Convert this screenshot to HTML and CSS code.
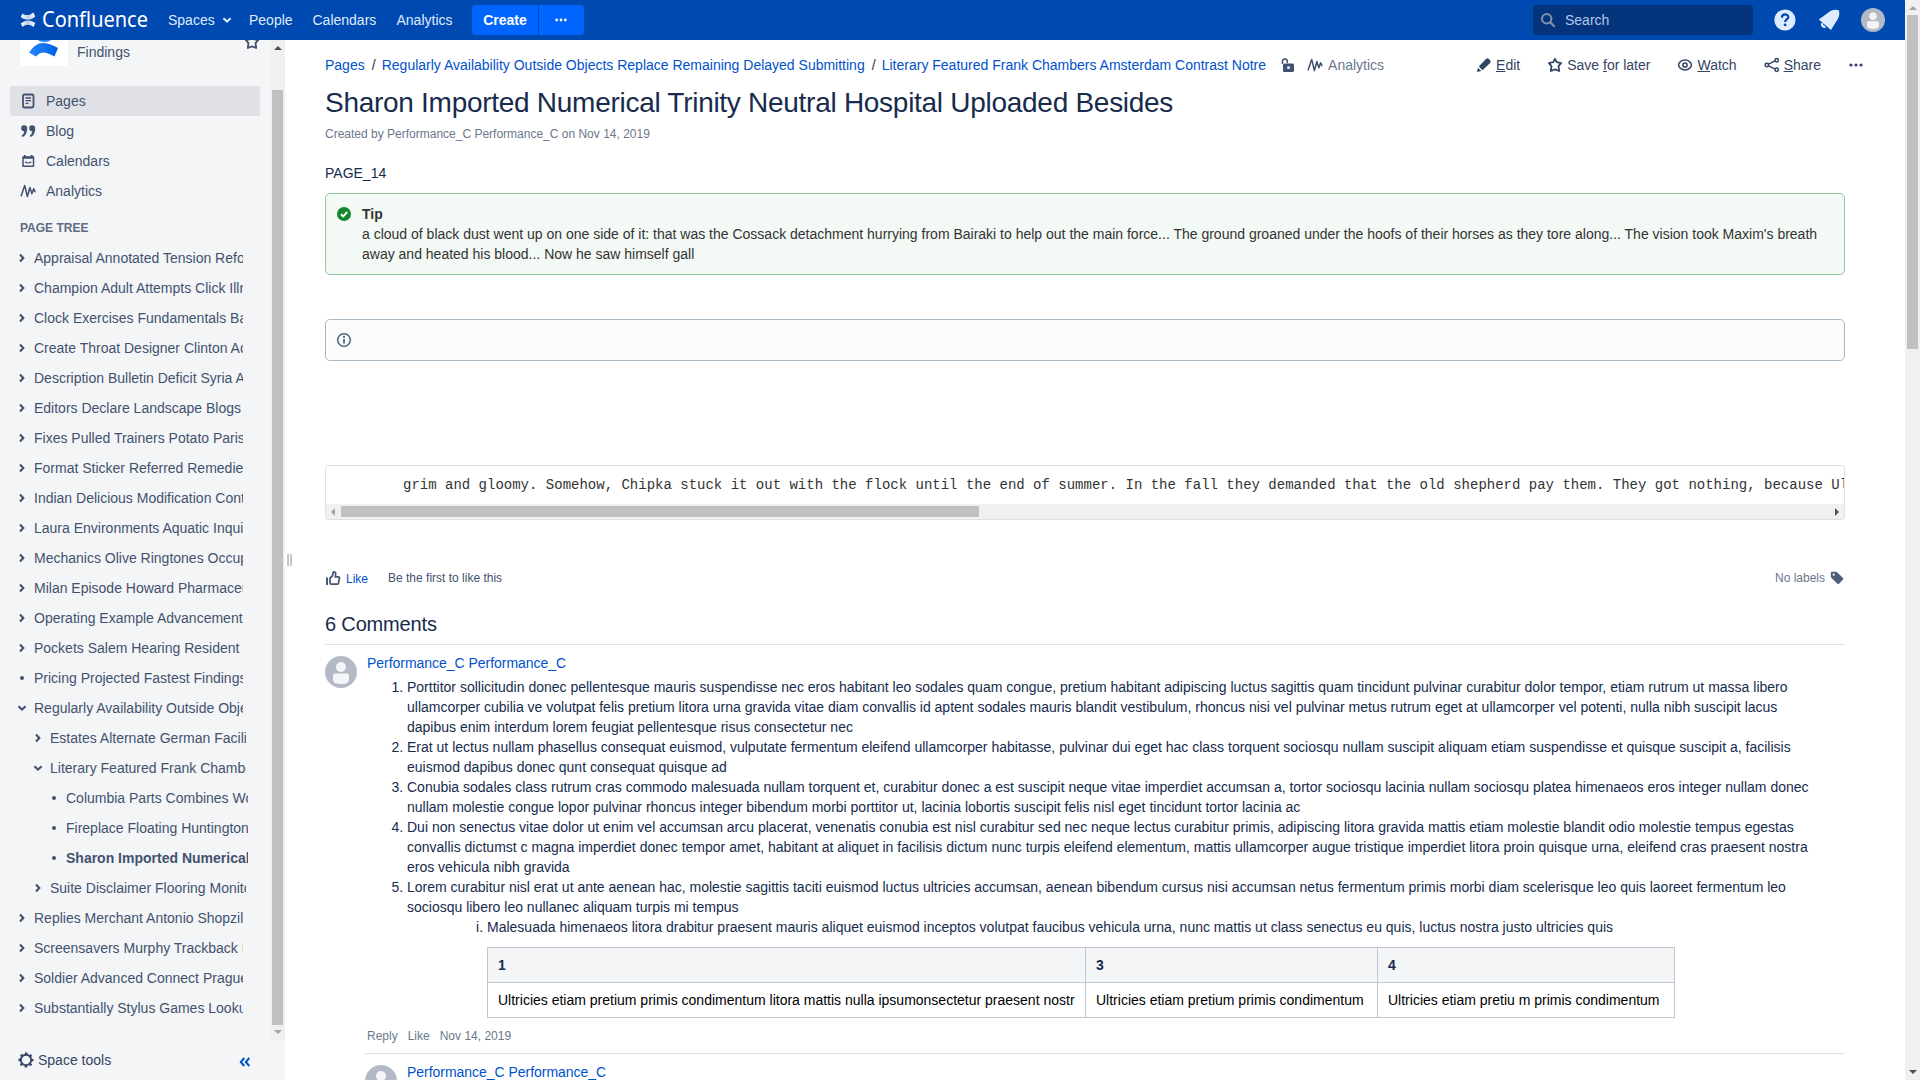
FILE: index.html
```html
<!DOCTYPE html>
<html lang="en">
<head>
<meta charset="utf-8">
<title>Sharon Imported Numerical Trinity Neutral Hospital Uploaded Besides - Confluence</title>
<link rel="stylesheet" href="styles.css">
</head>
<body>
<svg class="defs" aria-hidden="true">
  <symbol id="right" viewBox="0 0 10 10"><path d="M3 1.6 6.3 5 3 8.4" fill="none" stroke="currentColor" stroke-width="2.1"/></symbol>
  <symbol id="down" viewBox="0 0 10 10"><path d="M1.4 3.3 5 6.6 8.6 3.3" fill="none" stroke="currentColor" stroke-width="2.1"/></symbol>
  <symbol id="dot" viewBox="0 0 10 10"><circle cx="5" cy="5" r="2" fill="currentColor"/></symbol>
  <symbol id="wave" viewBox="0 0 16 16"><path d="M1.200 12.800 4.700 2.500 7.400 13.500 9.900 4.500 11.900 10.800 13.700 5.800 15 8.800" fill="none" stroke="currentColor" stroke-width="1.500" stroke-linejoin="round" stroke-linecap="round"/></symbol>
  <symbol id="star" viewBox="0 0 16 16"><path d="M8 1.9 9.8 5.2 14.1 6.2 11.5 9.2 12.2 14 8 12.4 3.8 14 4.5 9.2 1.9 6.2 6.2 5.2Z" fill="none" stroke="currentColor" stroke-width="1.8" stroke-linejoin="round"/></symbol>
  <symbol id="dots" viewBox="0 0 16 16"><g fill="currentColor"><circle cx="3" cy="8" r="1.6"/><circle cx="8" cy="8" r="1.6"/><circle cx="13" cy="8" r="1.6"/></g></symbol>
  <symbol id="person" viewBox="0 0 32 32"><circle cx="16" cy="16" r="16" fill="#b3bac5"/><circle cx="16" cy="11" r="5" fill="#f4f5f7"/><path d="M8 19q0-1.500 1.500-1.500h13q1.500 0 1.500 1.500v5q0 4-8 4t-8-4Z" fill="#f4f5f7"/></symbol>
</svg>
<div class="page">
  <div class="app">
    <header class="topbar">
      <svg class="mark" viewBox="0 0 16 18"><defs><linearGradient id="m" x2="1"><stop stop-color="#fff"/><stop offset=".5" stop-color="#b9cdec"/><stop offset="1" stop-color="#fff"/></linearGradient></defs><path d="M2.500 2.500C5.500 5 9.500 4.500 13.500 1.500L15.200 5.500C10 9.800 5.500 9.500.8 6Z" fill="url(#m)"/><path d="M.8 12.500C5.500 8.500 10.500 8.500 15.200 12L13.500 16C9.500 13 6 13 2.500 16Z" fill="url(#m)"/></svg>
      <svg class="wordmark" viewBox="0 0 108 30"><text x="0" y="21.500" textLength="106" lengthAdjust="spacingAndGlyphs">Confluence</text></svg>
      <nav class="nav">
        <a class="spaces">Spaces <svg class="ic10"><use href="#down"/></svg></a>
        <a class="people">People</a><a class="cal">Calendars</a><a>Analytics</a>
      </nav>
      <div class="create"><b>Create</b><span><svg class="ic14"><use href="#dots"/></svg></span></div>
      <div class="search"><svg class="ic16" viewBox="0 0 16 16"><circle cx="6.700" cy="6.700" r="4.700" fill="none" stroke="#8292ae" stroke-width="2"/><path d="m10.200 10.200 4 4" stroke="#8292ae" stroke-width="2.200" stroke-linecap="round"/></svg>Search</div>
      <svg class="help" viewBox="0 0 22 22"><circle cx="11" cy="11" r="10.600" fill="#deebff"/><path d="M7.900 8.700c0-4.500 6.400-4.100 6.400-.6 0 2.500-3.200 2.300-3.200 5" fill="none" stroke="#0049b0" stroke-width="2.200"/><circle cx="11.100" cy="15.900" r="1.400" fill="#0049b0"/></svg>
      <svg class="bell" viewBox="0 0 22 22"><path d="M.8 10.600 12.500 2q4-2 8.500-.8 1 4-.6 7.800L13 21Z" fill="#deebff"/><path d="M4.200 14.200q-.9 3.700 3.200 3.900" fill="none" stroke="#deebff" stroke-width="2.400"/></svg>
      <svg class="me"><use href="#person"/></svg>
    </header>
    <div class="below">
      <aside class="side">
        <div class="side-top">
          <div class="side-scroll">
            <div class="space">
              <div class="tile"><svg viewBox="0 0 48 48"><defs><linearGradient id="g" x2="1"><stop stop-color="#2684ff"/><stop offset="1" stop-color="#0061e0"/></linearGradient></defs><path d="M13 14 18.500 22.500q6 3.200 12 0L36 14Z" fill="#2684ff"/><path d="M9 34.500Q15 25 23 25q6 0 15 5L34.500 38.500Q27 34.500 23.500 34.500 19.500 34.500 16 38.500Z" fill="url(#g)"/></svg></div>
              <span>Findings</span>
              <svg class="ic16 fav"><use href="#star"/></svg>
            </div>
            <nav class="links">
              <a class="on"><svg class="ic16" viewBox="0 0 16 16"><rect x="3" y="1.500" width="10.500" height="13" rx="1.500" fill="none" stroke="currentColor" stroke-width="1.800"/><path d="M5.500 5h5.500M5.500 7.700h5.500M5.500 10.300h3" stroke="currentColor" stroke-width="1.300"/></svg>Pages</a>
              <a><svg class="ic16" viewBox="0 0 16 16"><path d="M4 2.200a3 3 0 0 1 3.200 3.300C7.200 10 5.500 13 2.400 14l-.8-1.300Q4 11 4.300 8.200A3 3 0 1 1 4 2.200ZM12 2.200a3 3 0 0 1 3.200 3.300C15.200 10 13.500 13 10.400 14l-.8-1.300Q12 11 12.300 8.200A3 3 0 1 1 12 2.200Z" fill="currentColor"/></svg>Blog</a>
              <a><svg class="ic16" viewBox="0 0 16 16"><path d="M3 4v9.300h10.500V4Z" fill="none" stroke="currentColor" stroke-width="1.500" stroke-linejoin="round"/><path d="M3 4.700h10.500M4.800 2v3M11.700 2v3" stroke="currentColor" stroke-width="1.900"/><path d="M5 8.700q3.200 2.600 6.400 0" fill="none" stroke="currentColor" stroke-width="1.200"/></svg>Calendars</a>
              <a><svg class="ic16"><use href="#wave"/></svg>Analytics</a>
            </nav>
            <h5>PAGE TREE</h5>
            <div class="tree">
              <div><svg class="ic10"><use href="#right"/></svg><a>Appraisal Annotated Tension Reform</a></div>
              <div><svg class="ic10"><use href="#right"/></svg><a>Champion Adult Attempts Click Illness</a></div>
              <div><svg class="ic10"><use href="#right"/></svg><a>Clock Exercises Fundamentals Basic</a></div>
              <div><svg class="ic10"><use href="#right"/></svg><a>Create Throat Designer Clinton Acid</a></div>
              <div><svg class="ic10"><use href="#right"/></svg><a>Description Bulletin Deficit Syria About</a></div>
              <div><svg class="ic10"><use href="#right"/></svg><a>Editors Declare Landscape Blogs</a></div>
              <div><svg class="ic10"><use href="#right"/></svg><a>Fixes Pulled Trainers Potato Paris</a></div>
              <div><svg class="ic10"><use href="#right"/></svg><a>Format Sticker Referred Remedies</a></div>
              <div><svg class="ic10"><use href="#right"/></svg><a>Indian Delicious Modification Control</a></div>
              <div><svg class="ic10"><use href="#right"/></svg><a>Laura Environments Aquatic Inquiry</a></div>
              <div><svg class="ic10"><use href="#right"/></svg><a>Mechanics Olive Ringtones Occupied</a></div>
              <div><svg class="ic10"><use href="#right"/></svg><a>Milan Episode Howard Pharmaceutical</a></div>
              <div><svg class="ic10"><use href="#right"/></svg><a>Operating Example Advancement</a></div>
              <div><svg class="ic10"><use href="#right"/></svg><a>Pockets Salem Hearing Resident</a></div>
              <div><svg class="ic10"><use href="#dot"/></svg><a>Pricing Projected Fastest Findings</a></div>
              <div><svg class="ic10"><use href="#down"/></svg><a>Regularly Availability Outside Objects</a></div>
              <div class="l1"><svg class="ic10"><use href="#right"/></svg><a>Estates Alternate German Facilities</a></div>
              <div class="l1"><svg class="ic10"><use href="#down"/></svg><a>Literary Featured Frank Chambers</a></div>
              <div class="l2"><svg class="ic10"><use href="#dot"/></svg><a>Columbia Parts Combines Women</a></div>
              <div class="l2"><svg class="ic10"><use href="#dot"/></svg><a>Fireplace Floating Huntington</a></div>
              <div class="l2"><svg class="ic10"><use href="#dot"/></svg><a><b>Sharon Imported Numerical</b></a></div>
              <div class="l1"><svg class="ic10"><use href="#right"/></svg><a>Suite Disclaimer Flooring Monitor</a></div>
              <div><svg class="ic10"><use href="#right"/></svg><a>Replies Merchant Antonio Shopzilla</a></div>
              <div><svg class="ic10"><use href="#right"/></svg><a>Screensavers Murphy Trackback Bank</a></div>
              <div><svg class="ic10"><use href="#right"/></svg><a>Soldier Advanced Connect Prague</a></div>
              <div><svg class="ic10"><use href="#right"/></svg><a>Substantially Stylus Games Lookup</a></div>
            </div>
          </div>
          <div class="vbar side-bar"><i class="up dark"></i><span class="thumb"></span><i class="dn"></i></div>
        </div>
        <div class="tools"><svg class="ic16" viewBox="0 0 16 16"><circle cx="8" cy="8" r="5.200" fill="none" stroke="currentColor" stroke-width="1.900"/><circle cx="8" cy="8" r="6.600" fill="none" stroke="currentColor" stroke-width="1.800" stroke-dasharray="2.600 2.583" stroke-dashoffset="1.300"/></svg><span>Space tools</span>
          <svg class="collapse" viewBox="0 0 12 12"><path d="M5.300 2 1.800 6l3.500 4M10.300 2 6.800 6l3.500 4" fill="none" stroke="#0052cc" stroke-width="2"/></svg></div>
      </aside>
      <div class="grip"><i></i><i></i></div>
      <main class="main">
        <div class="head">
          <div class="crumbs"><a>Pages</a><i>/</i><a>Regularly Availability Outside Objects Replace Remaining Delayed Submitting</a><i>/</i><a>Literary Featured Frank Chambers Amsterdam Contrast Notre</a>
            <svg class="ic16 lock" viewBox="0 0 16 16"><path d="M2.500 7V4.300a2.400 2.400 0 0 1 4.800 0V6" fill="none" stroke="currentColor" stroke-width="1.500"/><path d="M4.500 6.500h8q1.500 0 1.500 1.500v5.500q0 1.500-1.500 1.500h-8Q3 15 3 13.500V8q0-1.500 1.500-1.500Z" fill="currentColor"/><circle cx="8.500" cy="10.700" r="1.400" fill="#fff"/></svg>
            <svg class="ic16 wv"><use href="#wave"/></svg><span class="an">Analytics</span></div>
          <div class="actions">
            <a class="a1"><svg class="ic16" viewBox="0 0 16 16"><path d="M1 15l.9-4.300 3.400 3.400ZM2.800 9.600 9.900 1.900q1.300-1.200 2.700-.1l1.300 1.200q1.500 1.500.2 3L6.500 13.200Z" fill="currentColor"/></svg><span><u>E</u>dit</span></a>
            <a class="a2"><svg class="ic16"><use href="#star"/></svg><span>Save <u>f</u>or later</span></a>
            <a class="a3"><svg class="ic16" viewBox="0 0 16 16"><ellipse cx="8" cy="8" rx="6.400" ry="4.900" fill="none" stroke="currentColor" stroke-width="1.500"/><circle cx="8" cy="8" r="2.100" fill="none" stroke="currentColor" stroke-width="1.500"/></svg><span><u>W</u>atch</span></a>
            <a class="a4"><svg class="ic16" viewBox="0 0 16 16"><g fill="none" stroke="currentColor" stroke-width="1.500"><circle cx="2.900" cy="8" r="1.700"/><circle cx="12.700" cy="3.200" r="1.700"/><circle cx="12.700" cy="12.800" r="1.700"/><path d="m4.500 7.200 6.600-3.300M4.500 8.800l6.600 3.300"/></g></svg><span><u>S</u>hare</span></a>
            <svg class="ic16"><use href="#dots"/></svg>
          </div>
        </div>
        <h1>Sharon Imported Numerical Trinity Neutral Hospital Uploaded Besides</h1>
        <p class="meta">Created by Performance_C Performance_C on Nov 14, 2019</p>
        <p class="body">PAGE_14</p>
        <div class="panel tip"><svg class="ic16" viewBox="0 0 16 16"><circle cx="8" cy="8" r="7" fill="#14892c"/><path d="m5 8.200 2.200 2.200L11.200 6" fill="none" stroke="#fff" stroke-width="2"/></svg><div><b>Tip</b><br>a cloud of black dust went up on one side of it: that was the Cossack detachment hurrying from Bairaki to help out the main force... The ground groaned under the hoofs of their horses as they tore along... The vision took Maxim's breath away and heated his blood... Now he saw himself gall</div></div>
        <div class="panel info"><svg class="ic16" viewBox="0 0 16 16"><circle cx="8" cy="8" r="6.300" fill="none" stroke="#4a6785" stroke-width="1.500"/><path d="M8 7v4.500" stroke="#4a6785" stroke-width="1.800"/><circle cx="8" cy="4.900" r="1.100" fill="#4a6785"/></svg></div>
        <div class="code"><pre>grim and gloomy. Somehow, Chipka stuck it out with the flock until the end of summer. In the fall they demanded that the old shepherd pay them. They got nothing, because Ulas</pre>
          <div class="hbar"><i class="lf"></i><span class="thumb"></span><i class="rt"></i></div></div>
        <div class="likes"><svg class="ic16" viewBox="0 0 16 16"><path d="M2 7.500V15" stroke="currentColor" stroke-width="1.900"/><path d="M5 8.200 7.500 5.800 8.200 2.500Q8.500 1.500 9.600 2q1.400.6 1.100 2.400L10.300 6.800h2.800q1.500 0 1.300 1.500l-.9 4.700q-.3 1.200-1.500 1.200H6.500Q5 14.200 5 12.800Z" fill="none" stroke="currentColor" stroke-width="1.700" stroke-linejoin="round"/></svg><a>Like</a><span>Be the first to like this</span><em>No labels</em><svg class="tag" viewBox="0 0 14 14"><path d="M.8 2Q.8.700 2.100.7h3.600q.8 0 1.400.6l5.700 5.400q1 1 0 2l-3.600 3.800q-1 1-2 0L1.500 7Q.9 6.400.9 5.600Z" fill="currentColor"/><circle cx="3.700" cy="3.700" r="1.100" fill="#fff"/></svg></div>
        <h2>6 Comments</h2>
        <section class="comment">
          <svg class="ava"><use href="#person"/></svg>
          <div class="cbody">
            <a class="name">Performance_C Performance_C</a>
            <ol>
              <li>Porttitor sollicitudin donec pellentesque mauris suspendisse nec eros habitant leo sodales quam congue, pretium habitant adipiscing luctus sagittis quam tincidunt pulvinar curabitur dolor tempor, etiam rutrum ut massa libero ullamcorper cubilia ve volutpat felis pretium litora urna gravida vitae diam convallis id aptent sodales mauris blandit vestibulum, rhoncus nisi vel pulvinar metus rutrum eget at ullamcorper vel potenti, nulla nibh suscipit lacus dapibus enim interdum lorem feugiat pellentesque risus consectetur nec</li>
              <li>Erat ut lectus nullam phasellus consequat euismod, vulputate fermentum eleifend ullamcorper habitasse, pulvinar dui eget hac class torquent sociosqu nullam suscipit aliquam etiam suspendisse et quisque suscipit a, facilisis euismod dapibus donec qunt consequat quisque ad</li>
              <li>Conubia sodales class rutrum cras commodo malesuada nullam torquent et, curabitur donec a est suscipit neque vitae imperdiet accumsan a, tortor sociosqu lacinia nullam sociosqu platea himenaeos eros integer nullam donec nullam molestie congue lopor pulvinar rhoncus integer bibendum morbi porttitor ut, lacinia lobortis suscipit felis nisl eget tincidunt tortor lacinia ac</li>
              <li>Dui non senectus vitae dolor ut enim vel accumsan arcu placerat, venenatis conubia est nisl curabitur sed nec neque lectus curabitur primis, adipiscing litora gravida mattis etiam molestie blandit odio molestie tempus egestas convallis dictumst c magna imperdiet donec tempor amet, habitant at aliquet in facilisis dictum nunc turpis eleifend elementum, mattis ullamcorper augue tristique imperdiet litora proin quisque urna, eleifend cras praesent nostra eros vehicula nibh gravida</li>
              <li>Lorem curabitur nisl erat ut ante aenean hac, molestie sagittis taciti euismod luctus ultricies accumsan, aenean bibendum cursus nisi accumsan netus fermentum primis morbi diam scelerisque leo quis laoreet fermentum leo sociosqu libero leo nullanec aliquam turpis mi tempus
                <ol class="roman"><li>Malesuada himenaeos litora drabitur praesent mauris aliquet euismod inceptos volutpat faucibus vehicula urna, nunc mattis ut class senectus eu quis, luctus nostra justo ultricies quis
                  <table><tr><th class="c1">1</th><th class="c2">3</th><th class="c3">4</th></tr><tr><td>Ultricies etiam pretium primis condimentum litora mattis nulla ipsumonsectetur praesent nostr</td><td>Ultricies etiam pretium primis condimentum</td><td>Ultricies etiam pretiu m primis condimentum</td></tr></table></li></ol></li>
            </ol>
            <div class="foot"><span>Reply</span><span>Like</span><span>Nov 14, 2019</span></div>
          </div>
        </section>
        <section class="comment reply">
          <svg class="ava"><use href="#person"/></svg>
          <div class="cbody"><a class="name">Performance_C Performance_C</a></div>
        </section>
      </main>
    </div>
  </div>
  <div class="vbar page-bar"><i class="up"></i><span class="thumb"></span><i class="dn dark"></i></div>
</div>
</body>
</html>
```
FILE: styles.css
```css
* { box-sizing: border-box; }
html, body { margin: 0; height: 100%; overflow: hidden; }
body { font: 14px/20px "Liberation Sans", Arial, sans-serif; color: #172b4d; background: #fff; }
svg { display: block; flex: none; }
.defs { position: absolute; width: 0; height: 0; }
.ic10 { width: 10px; height: 10px; }
.ic14 { width: 14px; height: 14px; }
.ic16 { width: 16px; height: 16px; }
h1, h2, h5, p, pre, ol { margin: 0; padding: 0; font-weight: 400; }

.page { display: flex; height: 1080px; }
.app { flex: 1; min-width: 0; display: flex; flex-direction: column; }

/* top bar */
.topbar { height: 40px; flex: none; display: flex; align-items: center; background: #0049b0; color: #deebff; padding-left: 20px; }
.mark { width: 16px; height: 18px; margin-right: 6px; }
.wordmark { width: 108px; height: 30px; font: 400 21px "Noto Sans", sans-serif; fill: #fff; overflow: visible; }
.nav { display: flex; margin-left: 18px; }
.spaces { display: flex; align-items: center; gap: 7px; width: 81px; }
.people { width: 63.500px; }
.cal { width: 84px; }
.create { display: flex; gap: 1px; margin-left: 19.500px; height: 30px; line-height: 30px; color: #fff; }
.create b { width: 66px; background: #0065ff; text-align: center; border-radius: 3px 0 0 3px; }
.create span { width: 45px; background: #0065ff; border-radius: 0 3px 3px 0; display: flex; align-items: center; justify-content: center; padding-right: 2px; }
.search { margin-left: auto; width: 220px; height: 30px; background: #04347c; border-radius: 3px; display: flex; align-items: center; gap: 9px; padding-left: 7px; color: #b3c8ea; }
.help { width: 22px; height: 22px; margin-left: 21px; }
.bell { width: 22px; height: 22px; margin-left: 22px; }
.me { width: 24px; height: 24px; margin: 0 20px 0 21px; }

.below { flex: 1; min-height: 0; display: flex; }

/* sidebar */
.side { width: 285px; flex: none; background: #f4f5f7; color: #42526e; display: flex; flex-direction: column; }
.side-top { height: 1000px; flex: none; display: flex; }
.side-scroll { flex: 1; overflow: hidden; padding-left: 10px; }
.space { margin-top: -22px; height: 68px; display: flex; align-items: flex-start; padding-left: 10px; }
.tile { width: 48px; height: 48px; background: #fff; border-radius: 3px; }
.space span { margin: 24px 0 0 9px; }
.fav { margin: 16px 10px 0 auto; }
.links a { display: flex; align-items: center; gap: 10px; width: 250px; height: 30px; padding-left: 10px; border-radius: 3px; }
.links .on { background: #dfe1e6; }
h5 { font-size: 12px; font-weight: 700; line-height: 20px; color: #5e6c84; margin: 12px 0 5px 10px; }
.tree div { display: flex; align-items: center; height: 30px; width: 233px; padding-left: 7px; }
.tree a { flex: 1; min-width: 0; overflow: hidden; white-space: nowrap; margin-left: 7px; }
.tree .l1 { width: 236px; padding-left: 23px; }
.tree .l2 { width: 238px; padding-left: 39px; }
.tools { display: flex; align-items: center; height: 40px; padding: 0 34px 0 18px; color: #344563; }
.tools span { margin: 0 auto 0 4px; }
.collapse { width: 12px; height: 12px; margin-top: 4px; }
.grip { width: 40px; flex: none; display: flex; gap: 1px; padding: 514px 0 0 2px; }
.grip i { width: 2px; height: 12px; background: #c1c7d0; }

/* drawn scrollbars */
.vbar { width: 15px; flex: none; background: #f0f0f0; display: flex; flex-direction: column; align-items: center; }
.vbar .thumb { width: 11px; background: #c0c0c0; }
.vbar i, .hbar i { width: 0; height: 0; border: 4px solid transparent; }
.vbar .up { border-top: 0; border-bottom: 4px solid #a3a3a3; margin: 6px 0 5px; }
.vbar .dn { border-bottom: 0; border-top: 4px solid #a3a3a3; margin: auto 0 6px; }
.vbar .up.dark { border-bottom-color: #505050; }
.vbar .dn.dark { border-top-color: #505050; }
.side-bar .thumb { height: 935px; margin-top: 35px; }
.page-bar .thumb { height: 334px; }

/* content */
.main { flex: 1; min-width: 0; overflow: hidden; padding-right: 60px; }
.head { display: flex; align-items: center; height: 20px; margin: 15px -19px 0 0; white-space: nowrap; }
.crumbs { display: flex; align-items: center; }
.crumbs a, .name, .likes a { color: #0052cc; }
.crumbs i { font-style: normal; width: 4px; margin: 0 6px 0 7px; color: #333; }
.lock { color: #42526e; margin-left: 14px; }
.wv { color: #42526e; margin-left: 11px; }
.an { color: #6b778c; margin-left: 5px; }
.actions { display: flex; align-items: center; margin-left: auto; color: #344563; }
.actions a { display: flex; align-items: center; gap: 4px; margin-right: 27px; }
h1 { font-size: 28px; line-height: 32px; letter-spacing: -0.28px; margin-top: 12px; }
.meta { font-size: 12px; color: #6b778c; margin-top: 5px; }
.body { margin-top: 19px; }
.panel { display: flex; border: 1px solid #91c89c; border-radius: 5px; background: #f3f9f4; padding: 10px; color: #333; margin-top: 10px; height: 82px; }
.panel svg { margin: 2px 10px 0 0; }
.info { border-color: #aab8c6; background: #fcfcfc; height: 42px; margin-top: 44px; }
.code { border: 1px solid #dfe1e5; border-radius: 3px; margin-top: 104px; height: 55px; overflow: hidden; color: #333; }
.code pre { font: 14px/38px "Liberation Mono", monospace; height: 38px; padding-left: 77px; }
.hbar { height: 15px; background: #f0f0f0; display: flex; align-items: center; }
.hbar .thumb { width: 638px; height: 11px; background: #c0c0c0; }
.hbar .lf { border-left: 0; border-right: 4px solid #a3a3a3; margin: 0 6px 0 5px; }
.hbar .rt { border-right: 0; border-left: 4px solid #505050; margin: 0 5px 0 auto; }
.likes { display: flex; align-items: center; height: 20px; margin-top: 48px; font-size: 12px; color: #42526e; }
.likes a { margin: 2px 20px 0 5px; }
.likes em { font-style: normal; margin-left: auto; color: #6b778c; }
.tag { width: 14px; height: 14px; margin: 0 1px 0 5px; color: #505f79; }
h2 { font-size: 20px; line-height: 24px; letter-spacing: -0.16px; margin-top: 24px; height: 33px; border-bottom: 1px solid #dfe1e5; }
.comment { display: flex; padding-top: 8px; }
.ava { width: 32px; height: 32px; margin: 3px 10px 0 0; }
.cbody { flex: 1; min-width: 0; }
.name { display: block; letter-spacing: -0.03px; }
ol { padding-left: 40px; }
.cbody > ol { margin-top: 4px; padding-right: 20px; }
ol ol.roman { list-style: lower-roman; padding-left: 80px; }
table { border-collapse: collapse; margin-top: 10px; color: #000; table-layout: fixed; width: 1188px; }
.c1 { width: 598px; }
.c2 { width: 292px; }
th, td { border: 1px solid #c1c7d0; padding: 7px 10px; text-align: left; height: 35px; white-space: nowrap; }
th { background: #f4f5f7; color: #172b4d; }
.foot { display: flex; gap: 10px; font-size: 12px; color: #6b778c; margin-top: 8px; }
.reply { margin: 7px 0 0 40px; border-top: 1px solid #dfe1e5; }
```
